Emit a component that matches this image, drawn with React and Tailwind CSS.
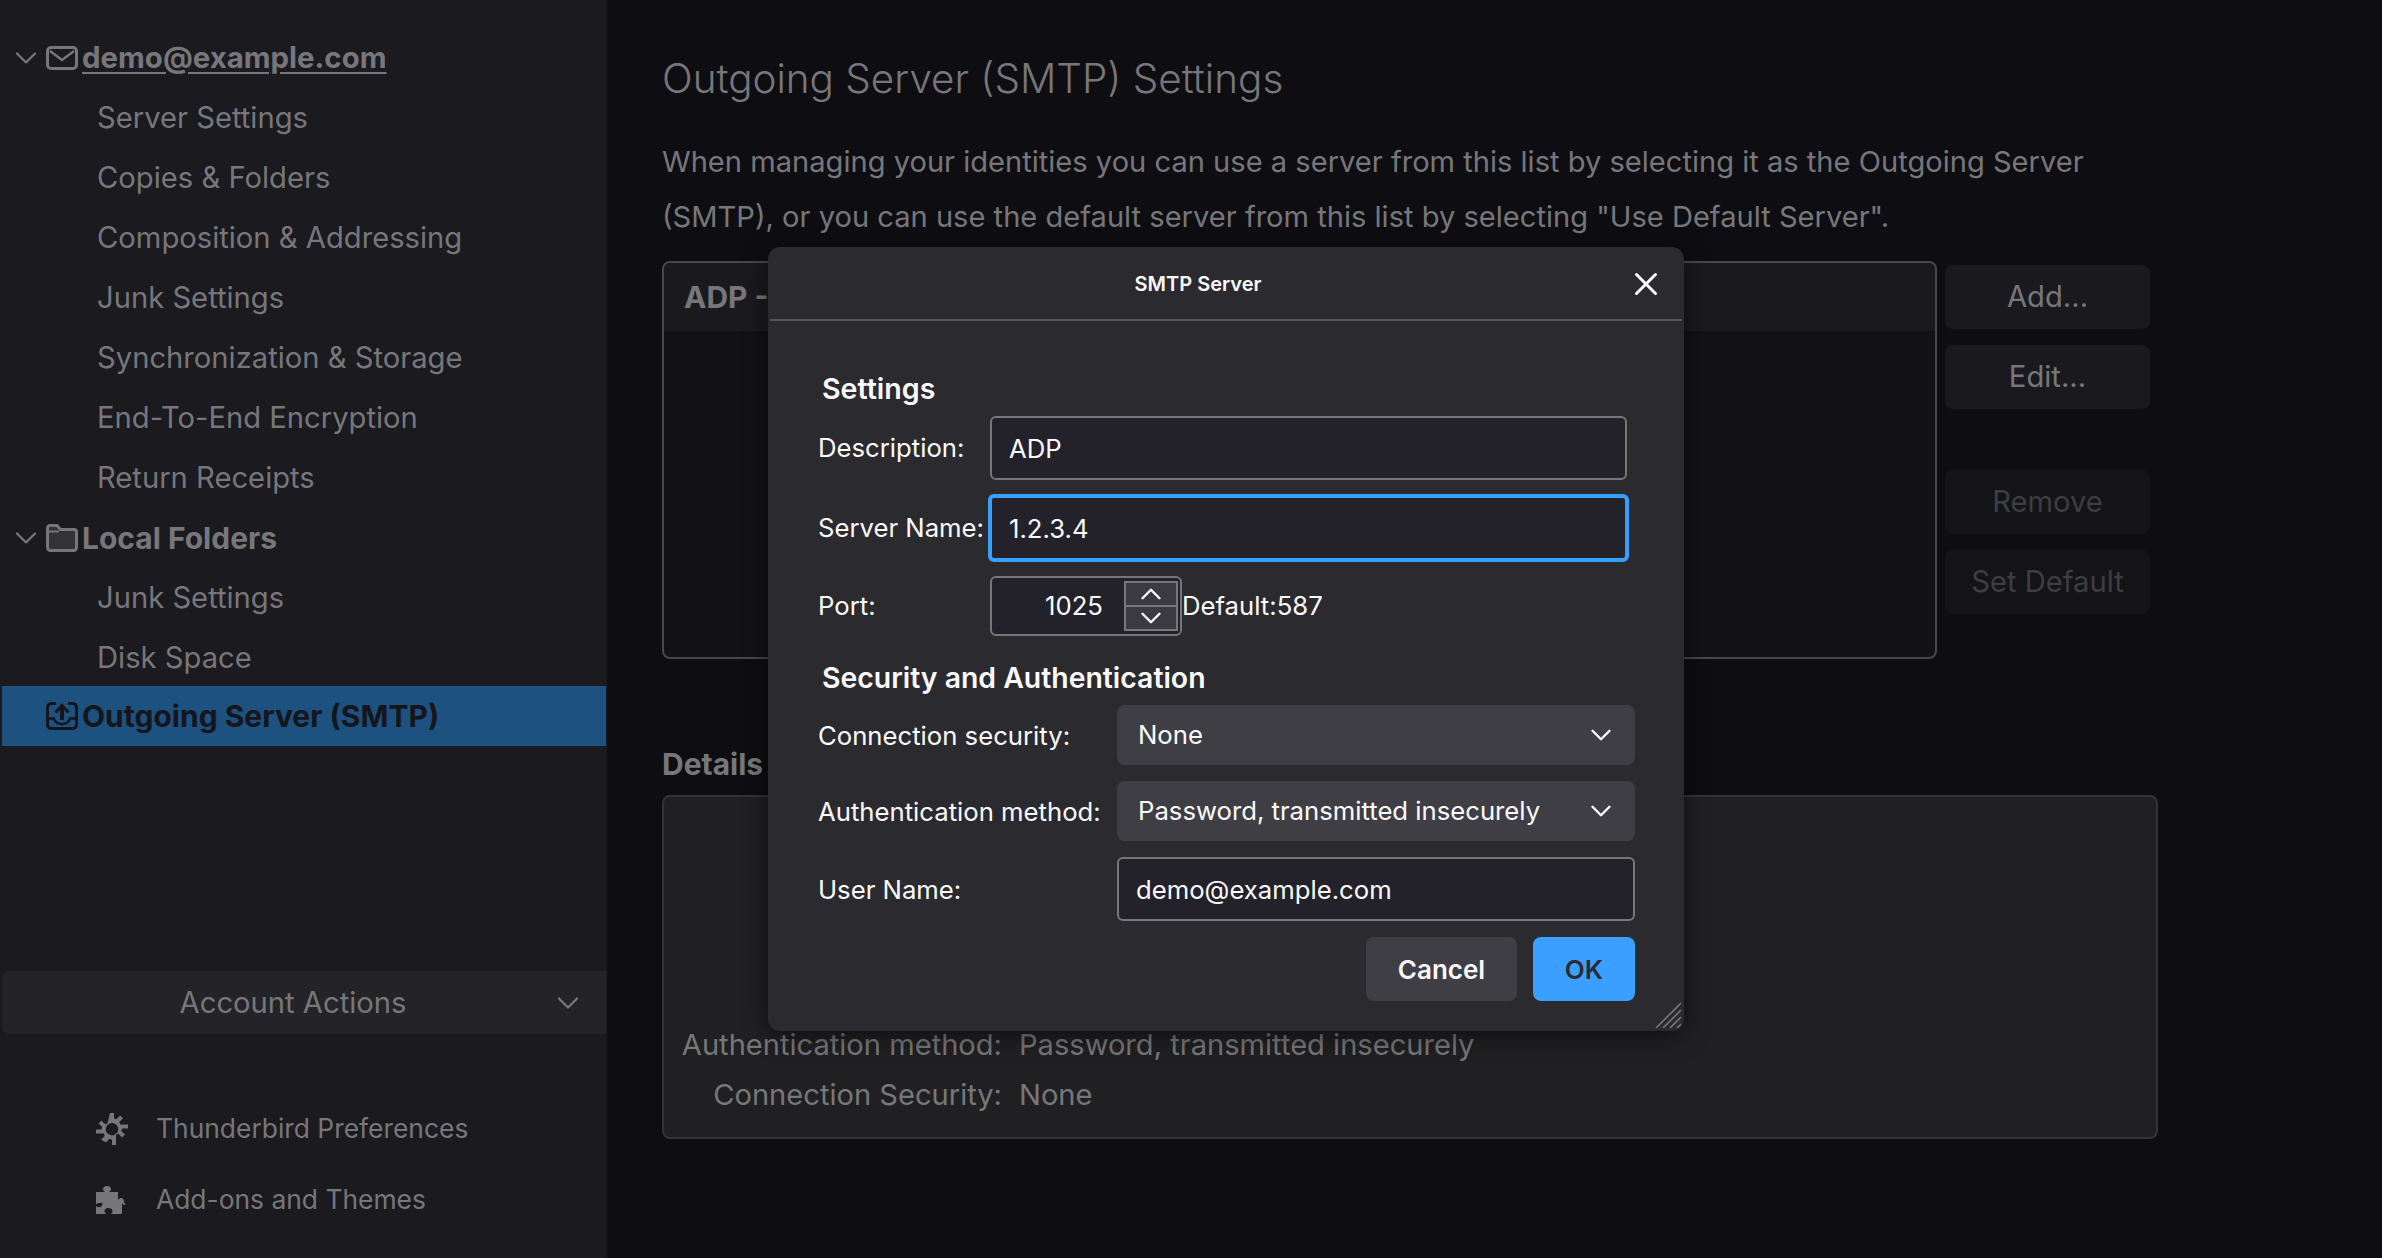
import { useState } from "react";
import { ChevronDown, ChevronUp, X } from "lucide-react";

const font = "font-['Inter','Liberation_Sans',sans-serif]";

const accountRows = [
  "Server Settings",
  "Copies & Folders",
  "Composition & Addressing",
  "Junk Settings",
  "Synchronization & Storage",
  "End-To-End Encryption",
  "Return Receipts",
];

const MailIcon = () => (
  <svg width="32" height="24" viewBox="0 0 32 24" fill="none" stroke="currentColor" strokeWidth="3">
    <rect x="1.5" y="1.5" width="29" height="21" rx="3.5" />
    <path d="M4 5l12 9 12-9" strokeWidth="2.4" />
  </svg>
);

const FolderIcon = () => (
  <svg width="32" height="28" viewBox="0 0 32 28">
    <path
      d="M4 1.500h7l3.500 4H28a2.500 2.500 0 0 1 2.500 2.500v15.500a3 3 0 0 1-3 3H4.500a3 3 0 0 1-3-3V4a2.500 2.500 0 0 1 2.500-2.500z"
      fill="#333337"
      stroke="#77777b"
      strokeWidth="3"
    />
    <path d="M3 7.500h10" stroke="#77777b" strokeWidth="2" />
  </svg>
);

const OutgoingIcon = () => (
  <svg width="32" height="28" viewBox="0 0 32 28" fill="none" stroke="#15151b">
    <path d="M10 1.500H5.500a4 4 0 0 0-4 4v17a4 4 0 0 0 4 4h21a4 4 0 0 0 4-4v-17a4 4 0 0 0-4-4H22" strokeWidth="3" />
    <path d="M2 16.500h6c1 3.500 4 5.500 8 5.500s7-2 8-5.500h6" strokeWidth="2.500" />
    <path d="M16 18V5" strokeWidth="4" />
    <path d="M9.500 10.500L16 3.500l6.500 7" strokeWidth="3" />
  </svg>
);

const GearIcon = () => (
  <svg width="32" height="32" viewBox="0 0 32 32" fill="#77777b">
    <path
      fillRule="evenodd"
      d="M14 0h4v5.300l2.400 1 3.700-3.800 2.900 2.900-3.800 3.700 1 2.400H32v4h-5.800l-1 2.400 3.800 3.700-2.900 2.900-3.700-3.800-2.400 1V32h-4v-5.300l-2.400-1-3.700 3.800L5 26.600l3.800-3.700-1-2.400H0v-4h5.300l1-2.400L2.500 10.400 5.400 7.500l3.700 3.800 2.400-1zM16 10a6.200 6.200 0 1 0 0 12.400A6.200 6.200 0 0 0 16 10z"
    />
  </svg>
);

const PuzzleIcon = () => (
  <svg width="32" height="30" viewBox="0 0 32 28" fill="#77777b">
    <path d="M0 6h9c-1.500-1-2-2-2-3 0-1.800 1.800-3 4-3s4 1.200 4 3c0 1-.5 2-2 3h9v8c1-1.500 2-2 3-2 1.800 0 3 1.500 3 3.500S30.800 19 29 19c-1 0-2-.5-3-2v11H15c1.200-1 1.500-2 1.500-3 0-1.800-1.800-3-4-3s-4 1.200-4 3c0 1 .5 2 1.500 3H0v-8c1 .8 2 1.200 3 1.200 2 0 3.500-1.500 3.500-3.400S5 17 3 17c-1 0-2 .4-3 1.200z" />
  </svg>
);

function SideRow({ children }) {
  return (
    <div className="flex h-[60px] items-center pl-[97px] text-[29.2px] text-[#77777b]">{children}</div>
  );
}

function AccountHeader({ icon, children, textClass }) {
  return (
    <div className="flex h-[60px] items-center text-[#77777b]">
      <ChevronDown size={36} strokeWidth={1.5} className="ml-[8px] mr-[2px] shrink-0" />
      {icon}
      <span className={`ml-[4px] font-bold ${textClass}`}>{children}</span>
    </div>
  );
}

function SideButton({ children, disabled, mt }) {
  return (
    <div
      className={`flex h-[64px] w-[205px] items-center justify-center rounded-[8px] text-[29.2px] ${mt} ${
        disabled ? "bg-[#141418] text-[#3d3d42]" : "bg-[#1a1a1e] text-[#77777b]"
      }`}
    >
      {children}
    </div>
  );
}

function FormLabel({ children, width }) {
  return <span className={`shrink-0 text-[25.7px] text-[#fbfbfe] ${width}`}>{children}</span>;
}

function Select({ children }) {
  return (
    <div className="flex h-[60px] w-[518px] items-center justify-between rounded-[8px] bg-[#3f3e44] pl-[21px] pr-[17px] text-[25.7px] text-[#fbfbfe]">
      <span>{children}</span>
      <ChevronDown size={34} strokeWidth={1.7} className="shrink-0" />
    </div>
  );
}

function TextField({ value, onChange, className }) {
  return (
    <input
      value={value}
      onChange={onChange}
      className={`rounded-[6px] bg-[#23222b] text-[25.7px] text-[#fbfbfe] outline-none ${className}`}
    />
  );
}

function SmtpDialog() {
  const [description, setDescription] = useState("ADP");
  const [server, setServer] = useState("1.2.3.4");
  const [user, setUser] = useState("demo@example.com");

  return (
    <div className="absolute left-[768px] top-[247px] flex h-[784px] w-[916px] flex-col rounded-[12px] bg-[#2b2a2f] shadow-[0_4px_24px_rgba(0,0,0,0.55)]">
      <div className="relative mx-[2px] flex h-[74px] shrink-0 items-center justify-center border-b-2 border-[#55555a] pr-[56px] pt-[2px] text-[20px] font-semibold text-[#fbfbfe]">
        SMTP Server
        <X size={38} strokeWidth={1.9} className="absolute right-[17px] top-[18px]" />
      </div>

      <div className="flex flex-col pl-[50px] pr-[49px]">
        <h3 className="ml-[4px] mt-[50px] text-[28.6px] leading-[36px] font-semibold text-[#fbfbfe]">Settings</h3>
        <div className="mt-[9px] flex items-center">
          <FormLabel width="w-[172px]">Description:</FormLabel>
          <TextField
            value={description}
            onChange={(e) => setDescription(e.target.value)}
            className="h-[64px] w-[637px] border-2 border-[#77767b] pl-[17px]"
          />
        </div>
        <div className="mt-[14px] flex items-center">
          <FormLabel width="w-[170px]">Server Name:</FormLabel>
          <TextField
            value={server}
            onChange={(e) => setServer(e.target.value)}
            className="h-[68px] w-[641px] border-4 border-[#3a9eff] pl-[17px]"
          />
        </div>
        <div className="mt-[14px] flex items-center">
          <FormLabel width="w-[172px]">Port:</FormLabel>
          <div className="flex h-[60px] w-[192px] shrink-0 items-center justify-between rounded-[6px] border-2 border-[#77767b] bg-[#23222b] pl-[53px] pr-[2px] text-[25.7px] text-[#fbfbfe]">
            <span>1025</span>
            <div className="flex h-[50px] w-[54px] flex-col border-2 border-[#77767b] bg-[#3b3a43]">
              <div className="flex flex-1 items-center justify-center overflow-hidden border-b-2 border-[#77767b]">
                <ChevronUp size={34} strokeWidth={1.7} className="shrink-0" />
              </div>
              <div className="flex flex-1 items-center justify-center overflow-hidden">
                <ChevronDown size={34} strokeWidth={1.7} className="shrink-0" />
              </div>
            </div>
          </div>
          <span className="text-[25.7px] text-[#fbfbfe]">Default:587</span>
        </div>

        <h3 className="ml-[4px] mt-[24px] text-[28.4px] leading-[36px] font-semibold text-[#fbfbfe]">
          Security and Authentication
        </h3>
        <div className="mt-[9px] flex items-center">
          <FormLabel width="w-[299px] pt-[2px]">Connection security:</FormLabel>
          <Select>None</Select>
        </div>
        <div className="mt-[16px] flex items-center">
          <FormLabel width="w-[299px] pt-[3px]">Authentication method:</FormLabel>
          <Select>Password, transmitted insecurely</Select>
        </div>
        <div className="mt-[16px] flex items-center">
          <FormLabel width="w-[299px] pt-[3px]">User Name:</FormLabel>
          <TextField
            value={user}
            onChange={(e) => setUser(e.target.value)}
            className="h-[64px] w-[518px] border-2 border-[#77767b] pl-[17px]"
          />
        </div>
        <div className="mt-[16px] flex justify-end gap-[16px]">
          <button
            type="button"
            className="h-[64px] w-[151px] rounded-[8px] bg-[#3f3e44] text-[26px] font-semibold text-[#fbfbfe]"
          >
            Cancel
          </button>
          <button
            type="button"
            className="h-[64px] w-[102px] rounded-[8px] bg-[#3a9fff] text-[26px] font-semibold text-[#2b2a33]"
          >
            OK
          </button>
        </div>
      </div>

      <svg
        width="26"
        height="26"
        viewBox="0 0 26 26"
        className="absolute bottom-[3px] right-[3px]"
        stroke="#77777b"
        strokeWidth="1.6"
      >
        <path d="M1 26L26 1M8 26L26 8M15 26L26 15M22 26l4-4" />
      </svg>
    </div>
  );
}

export default function App() {
  return (
    <div className={`relative flex h-[1258px] w-[2382px] overflow-hidden bg-[#0e0e12] ${font}`}>
      {/* sidebar */}
      <aside className="flex h-full w-[607px] shrink-0 flex-col bg-[#1a1a1f] pt-[28px]">
        <AccountHeader icon={<span className="text-[#77777b]"><MailIcon /></span>} textClass="text-[29.4px] underline underline-offset-[4px]">
          demo@example.com
        </AccountHeader>
        {accountRows.map((row) => (
          <SideRow key={row}>{row}</SideRow>
        ))}
        <AccountHeader icon={<FolderIcon />} textClass="text-[30px]">Local Folders</AccountHeader>
        <SideRow>Junk Settings</SideRow>
        <SideRow>Disk Space</SideRow>
        <div className="ml-[2px] mt-[-2px] flex h-[60px] w-[604px] items-center bg-[#1c5180] pl-[44px] text-[#15151b]">
          <OutgoingIcon />
          <span className="ml-[4px] text-[30px] font-bold">Outgoing Server (SMTP)</span>
        </div>

        <div className="relative ml-[2px] mt-[225px] flex h-[63px] w-[604px] items-center justify-center rounded-l-[8px] bg-[#232328] pr-[22px] pt-[1px] text-[29.2px] text-[#77777b]">
          Account Actions
          <ChevronDown size={36} strokeWidth={1.5} className="absolute right-[20px] top-[14px]" />
        </div>

        <div className="mt-[79px] flex h-[32px] items-center pl-[96px] text-[26.4px] text-[#77777b]">
          <GearIcon />
          <span className="ml-[28px]">Thunderbird Preferences</span>
        </div>
        <div className="mt-[39px] flex h-[32px] items-center pl-[96px] text-[26.4px] text-[#77777b]">
          <PuzzleIcon />
          <span className="ml-[28px]">Add-ons and Themes</span>
        </div>
      </aside>

      {/* main */}
      <main className="flex-1 pl-[55px] pt-[54px] text-[#77777b]">
        <h1 className="text-[40.4px] leading-[50px] font-light">Outgoing Server (SMTP) Settings</h1>
        <p className="mt-[30px] w-[1450px] text-[29.1px] leading-[55px]">
          When managing your identities you can use a server from this list by selecting it as the Outgoing Server
          (SMTP), or you can use the default server from this list by selecting "Use Default Server".
        </p>

        <div className="mt-[17px] flex items-start">
          <div className="h-[398px] w-[1275px] overflow-hidden rounded-[8px] border-2 border-[#48484c] bg-[#121216]">
            <div className="flex h-[68px] items-center bg-[#1a1a1e] pl-[20px] text-[30px] font-bold">ADP -</div>
          </div>
          <div className="ml-[8px] mt-[4px] flex flex-col">
            <SideButton>Add...</SideButton>
            <SideButton mt="mt-[16px]">Edit...</SideButton>
            <SideButton disabled mt="mt-[61px]">
              Remove
            </SideButton>
            <SideButton disabled mt="mt-[16px]">
              Set Default
            </SideButton>
          </div>
        </div>

        <h2 className="mt-[87px] text-[30px] leading-[36px] font-bold">Details</h2>
        <div className="mt-[13px] flex h-[344px] w-[1496px] flex-col justify-end rounded-[8px] border-2 border-[#333337] bg-[#202022] pb-[17px] text-[29.1px] leading-[50px]">
          <div className="flex">
            <span className="w-[338px] text-right">Authentication method:</span>
            <span className="ml-[17px]">Password, transmitted insecurely</span>
          </div>
          <div className="flex">
            <span className="w-[338px] text-right">Connection Security:</span>
            <span className="ml-[17px]">None</span>
          </div>
        </div>
      </main>

      <SmtpDialog />
    </div>
  );
}
